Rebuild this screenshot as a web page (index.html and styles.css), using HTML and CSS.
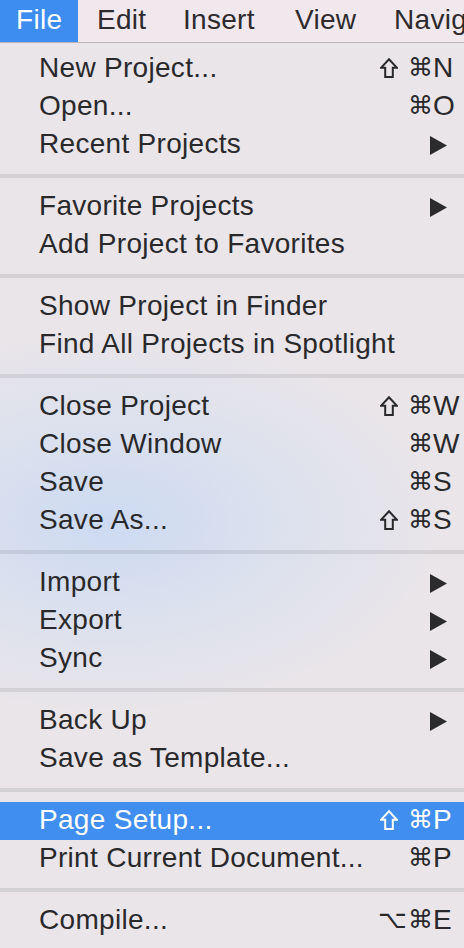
FILE: index.html
```html
<!DOCTYPE html>
<html>
<head>
<meta charset="utf-8">
<link rel="stylesheet" href="styles.css">
</head>
<body>
<div class="screen">
  <div class="menubar">
    <div class="bar-item b-file active">File</div>
    <div class="bar-item b-edit">Edit</div>
    <div class="bar-item b-insert">Insert</div>
    <div class="bar-item b-view">View</div>
    <div class="bar-item b-nav">Navigate</div>
  </div>
  <div class="menu">
    <div class="row"><span class="label">New Project...</span><span class="mods"><svg class="shift" viewBox="0 0 18 20"><polygon points="9,1.2 17,9.8 12.8,9.8 12.8,19 5.2,19 5.2,9.8 1,9.8"/></svg><span class="m cmd">⌘</span></span><span class="key">N</span></div>
    <div class="row"><span class="label">Open...</span><span class="mods"><span class="m cmd">⌘</span></span><span class="key">O</span></div>
    <div class="row"><span class="label">Recent Projects</span><span class="mods"></span><span class="key"><svg class="tri" viewBox="0 0 17 19"><polygon points="0,0 17,9.5 0,19"/></svg></span></div>
    <div class="sep"></div>
    <div class="row"><span class="label">Favorite Projects</span><span class="mods"></span><span class="key"><svg class="tri" viewBox="0 0 17 19"><polygon points="0,0 17,9.5 0,19"/></svg></span></div>
    <div class="row"><span class="label">Add Project to Favorites</span><span class="mods"></span><span class="key"></span></div>
    <div class="sep"></div>
    <div class="row"><span class="label">Show Project in Finder</span><span class="mods"></span><span class="key"></span></div>
    <div class="row"><span class="label">Find All Projects in Spotlight</span><span class="mods"></span><span class="key"></span></div>
    <div class="sep"></div>
    <div class="row"><span class="label">Close Project</span><span class="mods"><svg class="shift" viewBox="0 0 18 20"><polygon points="9,1.2 17,9.8 12.8,9.8 12.8,19 5.2,19 5.2,9.8 1,9.8"/></svg><span class="m cmd">⌘</span></span><span class="key">W</span></div>
    <div class="row"><span class="label">Close Window</span><span class="mods"><span class="m cmd">⌘</span></span><span class="key">W</span></div>
    <div class="row"><span class="label">Save</span><span class="mods"><span class="m cmd">⌘</span></span><span class="key">S</span></div>
    <div class="row"><span class="label">Save As...</span><span class="mods"><svg class="shift" viewBox="0 0 18 20"><polygon points="9,1.2 17,9.8 12.8,9.8 12.8,19 5.2,19 5.2,9.8 1,9.8"/></svg><span class="m cmd">⌘</span></span><span class="key">S</span></div>
    <div class="sep"></div>
    <div class="row"><span class="label">Import</span><span class="mods"></span><span class="key"><svg class="tri" viewBox="0 0 17 19"><polygon points="0,0 17,9.5 0,19"/></svg></span></div>
    <div class="row"><span class="label">Export</span><span class="mods"></span><span class="key"><svg class="tri" viewBox="0 0 17 19"><polygon points="0,0 17,9.5 0,19"/></svg></span></div>
    <div class="row"><span class="label">Sync</span><span class="mods"></span><span class="key"><svg class="tri" viewBox="0 0 17 19"><polygon points="0,0 17,9.5 0,19"/></svg></span></div>
    <div class="sep"></div>
    <div class="row"><span class="label">Back Up</span><span class="mods"></span><span class="key"><svg class="tri" viewBox="0 0 17 19"><polygon points="0,0 17,9.5 0,19"/></svg></span></div>
    <div class="row"><span class="label">Save as Template...</span><span class="mods"></span><span class="key"></span></div>
    <div class="sep"></div>
    <div class="row selected"><span class="label">Page Setup...</span><span class="mods"><svg class="shift" viewBox="0 0 18 20"><polygon points="9,1.2 17,9.8 12.8,9.8 12.8,19 5.2,19 5.2,9.8 1,9.8"/></svg><span class="m cmd">⌘</span></span><span class="key">P</span></div>
    <div class="row"><span class="label">Print Current Document...</span><span class="mods"><span class="m cmd">⌘</span></span><span class="key">P</span></div>
    <div class="sep"></div>
    <div class="row"><span class="label">Compile...</span><span class="mods"><span class="m opt">⌥</span><span class="m cmd">⌘</span></span><span class="key">E</span></div>
  </div>
</div>
</body>
</html>
```

FILE: styles.css
```css
html, body {
  margin: 0;
  padding: 0;
}
body {
  width: 464px;
  height: 948px;
  overflow: hidden;
  font-family: "Liberation Sans", Arial, sans-serif;
  font-size: 28px;
  letter-spacing: 0.3px;
  color: #29292c;
}
.screen {
  width: 464px;
  height: 948px;
  overflow: hidden;
  background: #e9e5e9;
}
.menubar {
  display: flex;
  height: 42px;
  background: #f0e8ed;
  border-bottom: 1px solid #b9b5b9;
  white-space: nowrap;
  overflow: hidden;
}
.bar-item {
  flex: none;
  box-sizing: border-box;
  padding: 0 0 3px 19px;
  line-height: 39px;
  color: #2e2a2d;
}
.b-file { width: 78px; padding-left: 16px; }
.b-edit { width: 86px; }
.b-insert { width: 112px; }
.b-view { width: 99px; }
.b-nav { width: 120px; }
.bar-item.active {
  background: #3d8cf0;
  color: #ffffff;
}
.menu {
  padding-top: 7px;
  height: 905px;
  box-sizing: border-box;
  background:
    radial-gradient(ellipse 330px 190px at 110px 480px, rgba(204, 218, 241, 1), rgba(214, 223, 240, 0.7) 50%, rgba(233, 229, 233, 0) 100%),
    #e9e5e9;
}
.row {
  display: grid;
  grid-template-columns: 1fr auto 31px;
  align-items: center;
  height: 38px;
  padding-left: 39px;
}
.label, .key {
  line-height: 35px;
  padding-bottom: 3px;
  white-space: nowrap;
}
.mods {
  display: flex;
  justify-content: flex-end;
  align-items: center;
  padding-right: 3px;
  font-family: "DejaVu Sans", sans-serif;
  font-size: 25px;
  letter-spacing: 0;
  line-height: 35px;
  padding-bottom: 3px;
}
.m {
  display: inline-block;
  text-align: center;
  overflow: visible;
}
.m.cmd {
  width: 22px;
}
.m.opt {
  width: 20px;
  margin-right: 10px;
}
.shift {
  flex: none;
  width: 18px;
  height: 20px;
  margin-right: 10px;
  margin-top: 1px;
  fill: none;
  stroke: #29292c;
  stroke-width: 2;
  stroke-linejoin: miter;
}
.key {
  display: flex;
  align-items: center;
}
.tri {
  width: 17px;
  height: 19px;
  margin-left: -3px;
  margin-top: 3px;
  fill: #2b2b2d;
}
.sep {
  height: 4px;
  margin: 10px 0;
  background: rgba(0, 0, 0, 0.085);
}
.selected {
  background: #3f8ef0;
  color: #ffffff;
}
.selected .shift {
  stroke: #ffffff;
}
```
